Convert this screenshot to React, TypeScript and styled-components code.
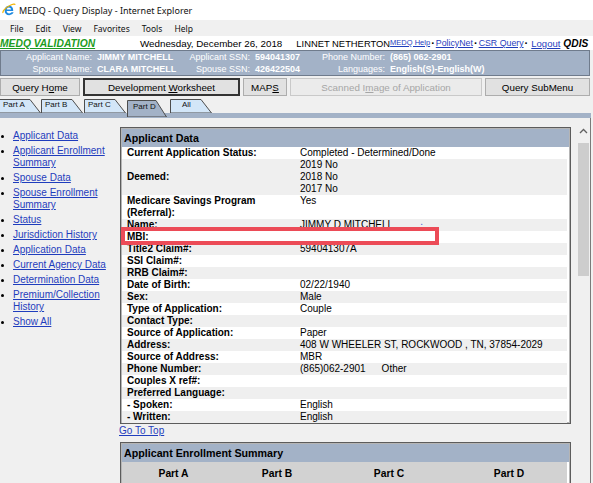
import React from 'react';
import styled, { createGlobalStyle } from 'styled-components';

const colors = {
  slate: '#a3b2c7',
  tab: '#d3e6f8',
  page: '#f0f0f0',
  link: '#1f3dbd',
  rowAlt: '#efefef',
  border: '#5c5c5c',
};

const GlobalStyle = createGlobalStyle`
  html, body { margin: 0; padding: 0; background: #f0f0f0; }
  body {
    width: 593px;
    height: 483px;
    overflow: hidden;
    font-family: "Liberation Sans", Arial, sans-serif;
    color: #000;
  }
`;

type Row = { label: React.ReactNode; value?: React.ReactNode[]; center?: boolean };

const getApplicantRows = (): Row[] => [
  { label: 'Current Application Status:', value: ['Completed - Determined/Done'] },
  { label: 'Deemed:', value: ['2019 No', '2018 No', '2017 No'], center: true },
  { label: <>Medicare Savings Program<br />(Referral):</>, value: ['Yes', ''] },
  { label: 'Name:', value: [<>JIMMY D MITCHELL<Dot>.</Dot></>] },
  { label: 'MBI:' },
  { label: 'Title2 Claim#:', value: ['594041307A'] },
  { label: 'SSI Claim#:' },
  { label: 'RRB Claim#:' },
  { label: 'Date of Birth:', value: ['02/22/1940'] },
  { label: 'Sex:', value: ['Male'] },
  { label: 'Type of Application:', value: ['Couple'] },
  { label: 'Contact Type:' },
  { label: 'Source of Application:', value: ['Paper'] },
  { label: 'Address:', value: ['408 W WHEELER ST, ROCKWOOD , TN, 37854-2029'] },
  { label: 'Source of Address:', value: ['MBR'] },
  { label: 'Phone Number:', value: [<>(865)062-2901<Other>Other</Other></>] },
  { label: 'Couples X ref#:' },
  { label: 'Preferred Language:' },
  { label: '- Spoken:', value: ['English'] },
  { label: '- Written:', value: ['English'] },
];

const navItems = [
  'Applicant Data',
  'Applicant Enrollment Summary',
  'Spouse Data',
  'Spouse Enrollment Summary',
  'Status',
  'Jurisdiction History',
  'Application Data',
  'Current Agency Data',
  'Determination Data',
  'Premium/Collection History',
  'Show All',
];

const tabs = [
  { label: 'Part A', w: 42, ml: -1 },
  { label: 'Part B', w: 42, ml: 0 },
  { label: 'Part C', w: 42, ml: 1 },
  { label: 'Part D', w: 40, ml: 1, active: true },
  { label: 'All', w: 42, ml: 3 },
];

const IeIcon = () => (
  <svg width="14" height="14" viewBox="0 0 16 16">
    <path
      d="M12.6 9.2H5.3c.2 1.8 1.4 2.8 3 2.8 1.1 0 2-.5 2.6-1.3h2.4c-.8 2-2.7 3.2-5 3.2-3.1 0-5.3-2.2-5.3-5.4S5.2 3.2 8.2 3.2c3 0 4.6 2.3 4.6 5.2v.8zM5.4 7.4h5c-.2-1.4-1.1-2.3-2.5-2.3S5.6 6 5.4 7.4z"
      fill="#1f8ae0"
    />
    <path d="M1.2 11.5C.2 9.4 4 5.2 9.5 2.6c3-1.4 5.2-1.7 5.6-.7" fill="none" stroke="#f4b400" strokeWidth="1.4" />
  </svg>
);

const TabShape = ({ w, h, fill }: { w: number; h: number; fill: string }) => (
  <TabSvg width={w} height={h}>
    <polygon points={`0.5,${h} 0.5,0.5 ${w - 11},0.5 ${w - 0.5},${h}`} fill={fill} stroke="#4d4d4d" />
  </TabSvg>
);

const App = () => {
  const applicantRows = getApplicantRows();
  return (
    <Page>
      <GlobalStyle />
      <TitleBar>
        <IeIcon />
        <span>MEDQ - Query Display - Internet Explorer</span>
      </TitleBar>
      <MenuBar>
        {['File', 'Edit', 'View', 'Favorites', 'Tools', 'Help'].map((m) => (
          <MenuItem key={m}>{m}</MenuItem>
        ))}
      </MenuBar>
      <HeaderRow>
        <Brand>MEDQ VALIDATION</Brand>
        <DateText>Wednesday, December 26, 2018</DateText>
        <UserName>LINNET NETHERTON</UserName>
        <SmallLink>MEDQ Help</SmallLink>
        <Sep>·</Sep>
        <HeadLink>PolicyNet</HeadLink>
        <Sep>·</Sep>
        <HeadLink>CSR Query</HeadLink>
        <Sep>·</Sep>
        <HeadLink $size={9.5} $ml={2}>Logout</HeadLink>
        <Qdis>QDIS</Qdis>
      </HeaderRow>
      <InfoBar>
        <InfoLabel>Applicant Name:</InfoLabel>
        <InfoValue>JIMMY MITCHELL</InfoValue>
        <InfoLabel>Applicant SSN:</InfoLabel>
        <InfoValue>594041307</InfoValue>
        <InfoLabel>Phone Number:</InfoLabel>
        <InfoValue>(865) 062-2901</InfoValue>
        <InfoLabel>Spouse Name:</InfoLabel>
        <InfoValue>CLARA MITCHELL</InfoValue>
        <InfoLabel>Spouse SSN:</InfoLabel>
        <InfoValue>426422504</InfoValue>
        <InfoLabel>Languages:</InfoLabel>
        <InfoValue>English(S)-English(W)</InfoValue>
      </InfoBar>
      <ButtonRow>
        <Button $w={80}>Query H<u>o</u>me</Button>
        <Button $w={157} $primary>Development <u>W</u>orksheet</Button>
        <Button $w={44}>MAP<u>S</u></Button>
        <Button $w={192} disabled>Scanned I<u>m</u>age of Application</Button>
        <Button $w={105}>Query SubMenu</Button>
      </ButtonRow>
      <TabRow>
        {tabs.map((t) => (
          <Tab key={t.label} $w={t.w} $ml={t.ml} $active={!!t.active}>
            <TabShape w={t.w} h={t.active ? 17 : 14} fill={t.active ? colors.slate : colors.tab} />
            <TabLabel $active={!!t.active} $center={t.label === 'All'}>{t.label}</TabLabel>
          </Tab>
        ))}
      </TabRow>
      <TabBand />
      <Content>
        <Nav>
          {navItems.map((n) => (
            <NavItem key={n}>
              <NavLink>{n}</NavLink>
            </NavItem>
          ))}
        </Nav>
        <Main>
          <Panel>
            <PanelHeader>Applicant Data</PanelHeader>
            {applicantRows.map((r, i) => (
              <DataRow key={i} $alt={i % 2 === 1} $center={!!r.center}>
                <DataLabel>{r.label}</DataLabel>
                <DataValue>
                  {(r.value ?? []).map((v, j) => (
                    <div key={j}>{v === '' ? '\u00a0' : v}</div>
                  ))}
                </DataValue>
              </DataRow>
            ))}
            <Highlight />
          </Panel>
          <TopLink>Go To Top</TopLink>
          <Panel $mt={5}>
            <PanelHeader>Applicant Enrollment Summary</PanelHeader>
            <PartsRow>
              {['Part A', 'Part B', 'Part C', 'Part D'].map((p) => (
                <PartHead key={p}>{p}</PartHead>
              ))}
            </PartsRow>
          </Panel>
        </Main>
        <ScrollBar>
          <ScrollArrow>
            <svg width="9" height="6" viewBox="0 0 9 6">
              <path d="M1 5L4.5 1.5 8 5" fill="none" stroke="#606060" strokeWidth="1.3" />
            </svg>
          </ScrollArrow>
          <ScrollThumb />
        </ScrollBar>
      </Content>
    </Page>
  );
};

export default App;

const Page = styled.div`
  width: 593px;
  height: 483px;
  display: flex;
  flex-direction: column;
  overflow: hidden;
  background: ${colors.page};
`;

const TitleBar = styled.div`
  height: 20px;
  flex-shrink: 0;
  background: #fff;
  display: flex;
  align-items: center;
  gap: 3px;
  padding-left: 2px;
  font-family: "Noto Sans", "Open Sans", sans-serif;
  font-size: 9px;
  color: #111;
`;

const MenuBar = styled.div`
  height: 16px;
  flex-shrink: 0;
  background: #f0f0f0;
  display: flex;
  align-items: center;
  padding-left: 10px;
  gap: 12px;
  font-family: "Noto Sans", "Open Sans", sans-serif;
  font-size: 8.5px;
`;

const MenuItem = styled.span`
  color: #111;
`;

const HeaderRow = styled.div`
  height: 14px;
  flex-shrink: 0;
  background: #fff;
  display: flex;
  align-items: center;
  white-space: nowrap;
`;

const Brand = styled.span`
  color: #1c9c22;
  font-weight: bold;
  font-style: italic;
  font-size: 10.3px;
  text-decoration: underline;
  width: 103px;
`;

const DateText = styled.span`
  font-size: 9.8px;
  margin-left: 37px;
`;

const UserName = styled.span`
  font-size: 9.4px;
  margin-left: 14px;
`;

const SmallLink = styled.span`
  font-size: 7.5px;
  color: ${colors.link};
  text-decoration: underline;
  margin-top: -2px;
`;

const Sep = styled.span`
  font-size: 11px;
  font-weight: bold;
  margin: 0 1px 0 1px;
`;

const HeadLink = styled.span<{ $size?: number; $ml?: number }>`
  font-size: ${(p) => p.$size ?? 8.8}px;
  margin-left: ${(p) => p.$ml ?? 0}px;
  color: ${colors.link};
  text-decoration: underline;
`;

const Qdis = styled.span`
  font-size: 10.2px;
  font-weight: bold;
  font-style: italic;
  margin-left: 3px;
`;

const InfoBar = styled.div`
  width: 588px;
  height: 24px;
  flex-shrink: 0;
  background: ${colors.slate};
  border: 1px solid #6f7b8c;
  display: grid;
  grid-template-columns: 91px 88px 60px 62px 63px 1fr;
  column-gap: 5px;
  align-content: center;
  color: #fff;
  font-size: 9px;
  line-height: 12px;
  white-space: nowrap;
`;

const InfoLabel = styled.span`
  display: flex;
  justify-content: flex-end;
`;

const InfoValue = styled.span`
  font-weight: bold;
`;

const ButtonRow = styled.div`
  display: flex;
  flex-shrink: 0;
  gap: 3px;
  margin-top: 2px;
  height: 18px;
`;

const Button = styled.button<{ $w: number; $primary?: boolean }>`
  width: ${(p) => p.$w}px;
  height: 18px;
  padding: 0;
  font-family: "Liberation Sans", Arial, sans-serif;
  font-size: 9.8px;
  color: #000;
  background: #e1e1e1;
  border: ${(p) => (p.$primary ? '2px solid #333' : '1px solid #adadad')};
  &:disabled {
    color: #a6a6a6;
    background: #ebebeb;
    border-color: #c9c9c9;
  }
`;

const TabRow = styled.div`
  height: 14px;
  flex-shrink: 0;
  margin-top: 3px;
  display: flex;
  align-items: flex-start;
  position: relative;
  z-index: 1;
`;

const Tab = styled.div<{ $w: number; $ml: number; $active: boolean }>`
  position: relative;
  width: ${(p) => p.$w}px;
  height: ${(p) => (p.$active ? 17 : 14)}px;
  margin-left: ${(p) => p.$ml}px;
  margin-top: ${(p) => (p.$active ? 1 : 0)}px;
  flex-shrink: 0;
`;

const TabSvg = styled.svg`
  position: absolute;
  left: 0;
  top: 0;
`;

const TabLabel = styled.span<{ $active: boolean; $center: boolean }>`
  position: relative;
  display: block;
  padding-left: ${(p) => (p.$center ? 12 : p.$active ? 6 : 4)}px;
  font-size: 8px;
  line-height: ${(p) => (p.$active ? 14 : 12)}px;
  color: #111;
`;

const TabBand = styled.div`
  height: 5px;
  flex-shrink: 0;
  width: 591px;
  background: ${colors.slate};
`;

const Content = styled.div`
  flex: 1;
  width: 590px;
  display: grid;
  grid-template-columns: 119px 457px 14px;
  border-right: 1px solid #7a7a7a;
  min-height: 0;
`;

const Nav = styled.ul`
  margin: 0;
  padding: 12px 0 0 13px;
  list-style: disc;
  font-size: 10px;
  line-height: 12px;
`;

const NavItem = styled.li`
  margin-bottom: 3px;
  padding-right: 4px;
  &::marker {
    font-size: 9px;
  }
`;

const NavLink = styled.span`
  color: ${colors.link};
  text-decoration: underline;
`;

const Main = styled.div`
  padding-top: 9px;
  min-width: 0;
`;

const Panel = styled.div<{ $mt?: number }>`
  position: relative;
  margin-left: 1px;
  margin-top: ${(p) => p.$mt ?? 0}px;
  width: 447px;
  background: #fff;
  border: 1px solid ${colors.border};
  box-shadow: inset 0 0 0 1px #b5b5b5;
  padding: 1px 1px 0 1px;
`;

const PanelHeader = styled.div`
  height: 18px;
  line-height: 19px;
  background: ${colors.slate};
  font-size: 10.7px;
  font-weight: bold;
  padding-left: 2px;
`;

const DataRow = styled.div<{ $alt: boolean; $center: boolean }>`
  display: grid;
  grid-template-columns: 178px 1fr;
  align-items: ${(p) => (p.$center ? 'center' : 'start')};
  background: ${(p) => (p.$alt ? colors.rowAlt : '#fff')};
  margin-right: 2px;
  font-size: 10px;
  line-height: 12px;
  min-height: 12px;
  white-space: nowrap;
`;

const DataLabel = styled.div`
  font-weight: bold;
  padding-left: 5px;
`;

const DataValue = styled.div``;

const Dot = styled.span`
  position: relative;
  top: -3px;
  color: #3b5bd6;
  margin-left: 27px;
`;

const Other = styled.span`
  margin-left: 16px;
`;

const Highlight = styled.div`
  position: absolute;
  left: 0;
  top: 99px;
  width: 318px;
  height: 18px;
  box-sizing: border-box;
  border: 4px solid #ec4b57;
`;

const TopLink = styled.div`
  margin-top: 1px;
  font-size: 10px;
  line-height: 12px;
  color: ${colors.link};
  text-decoration: underline;
`;

const PartsRow = styled.div`
  display: grid;
  grid-template-columns: 103px 104px 120px 120px;
  background: #d2d2d2;
  height: 22px;
  align-items: center;
  margin-right: 2px;
`;

const PartHead = styled.div`
  text-align: center;
  font-weight: bold;
  font-size: 10.3px;
`;

const ScrollBar = styled.div`
  display: flex;
  flex-direction: column;
  align-items: center;
  background: #f0f0f0;
`;

const ScrollArrow = styled.div`
  height: 25px;
  display: flex;
  align-items: center;
  justify-content: center;
  width: 100%;
`;

const ScrollThumb = styled.div`
  width: 11px;
  height: 133px;
  background: #cdcdcd;
`;
